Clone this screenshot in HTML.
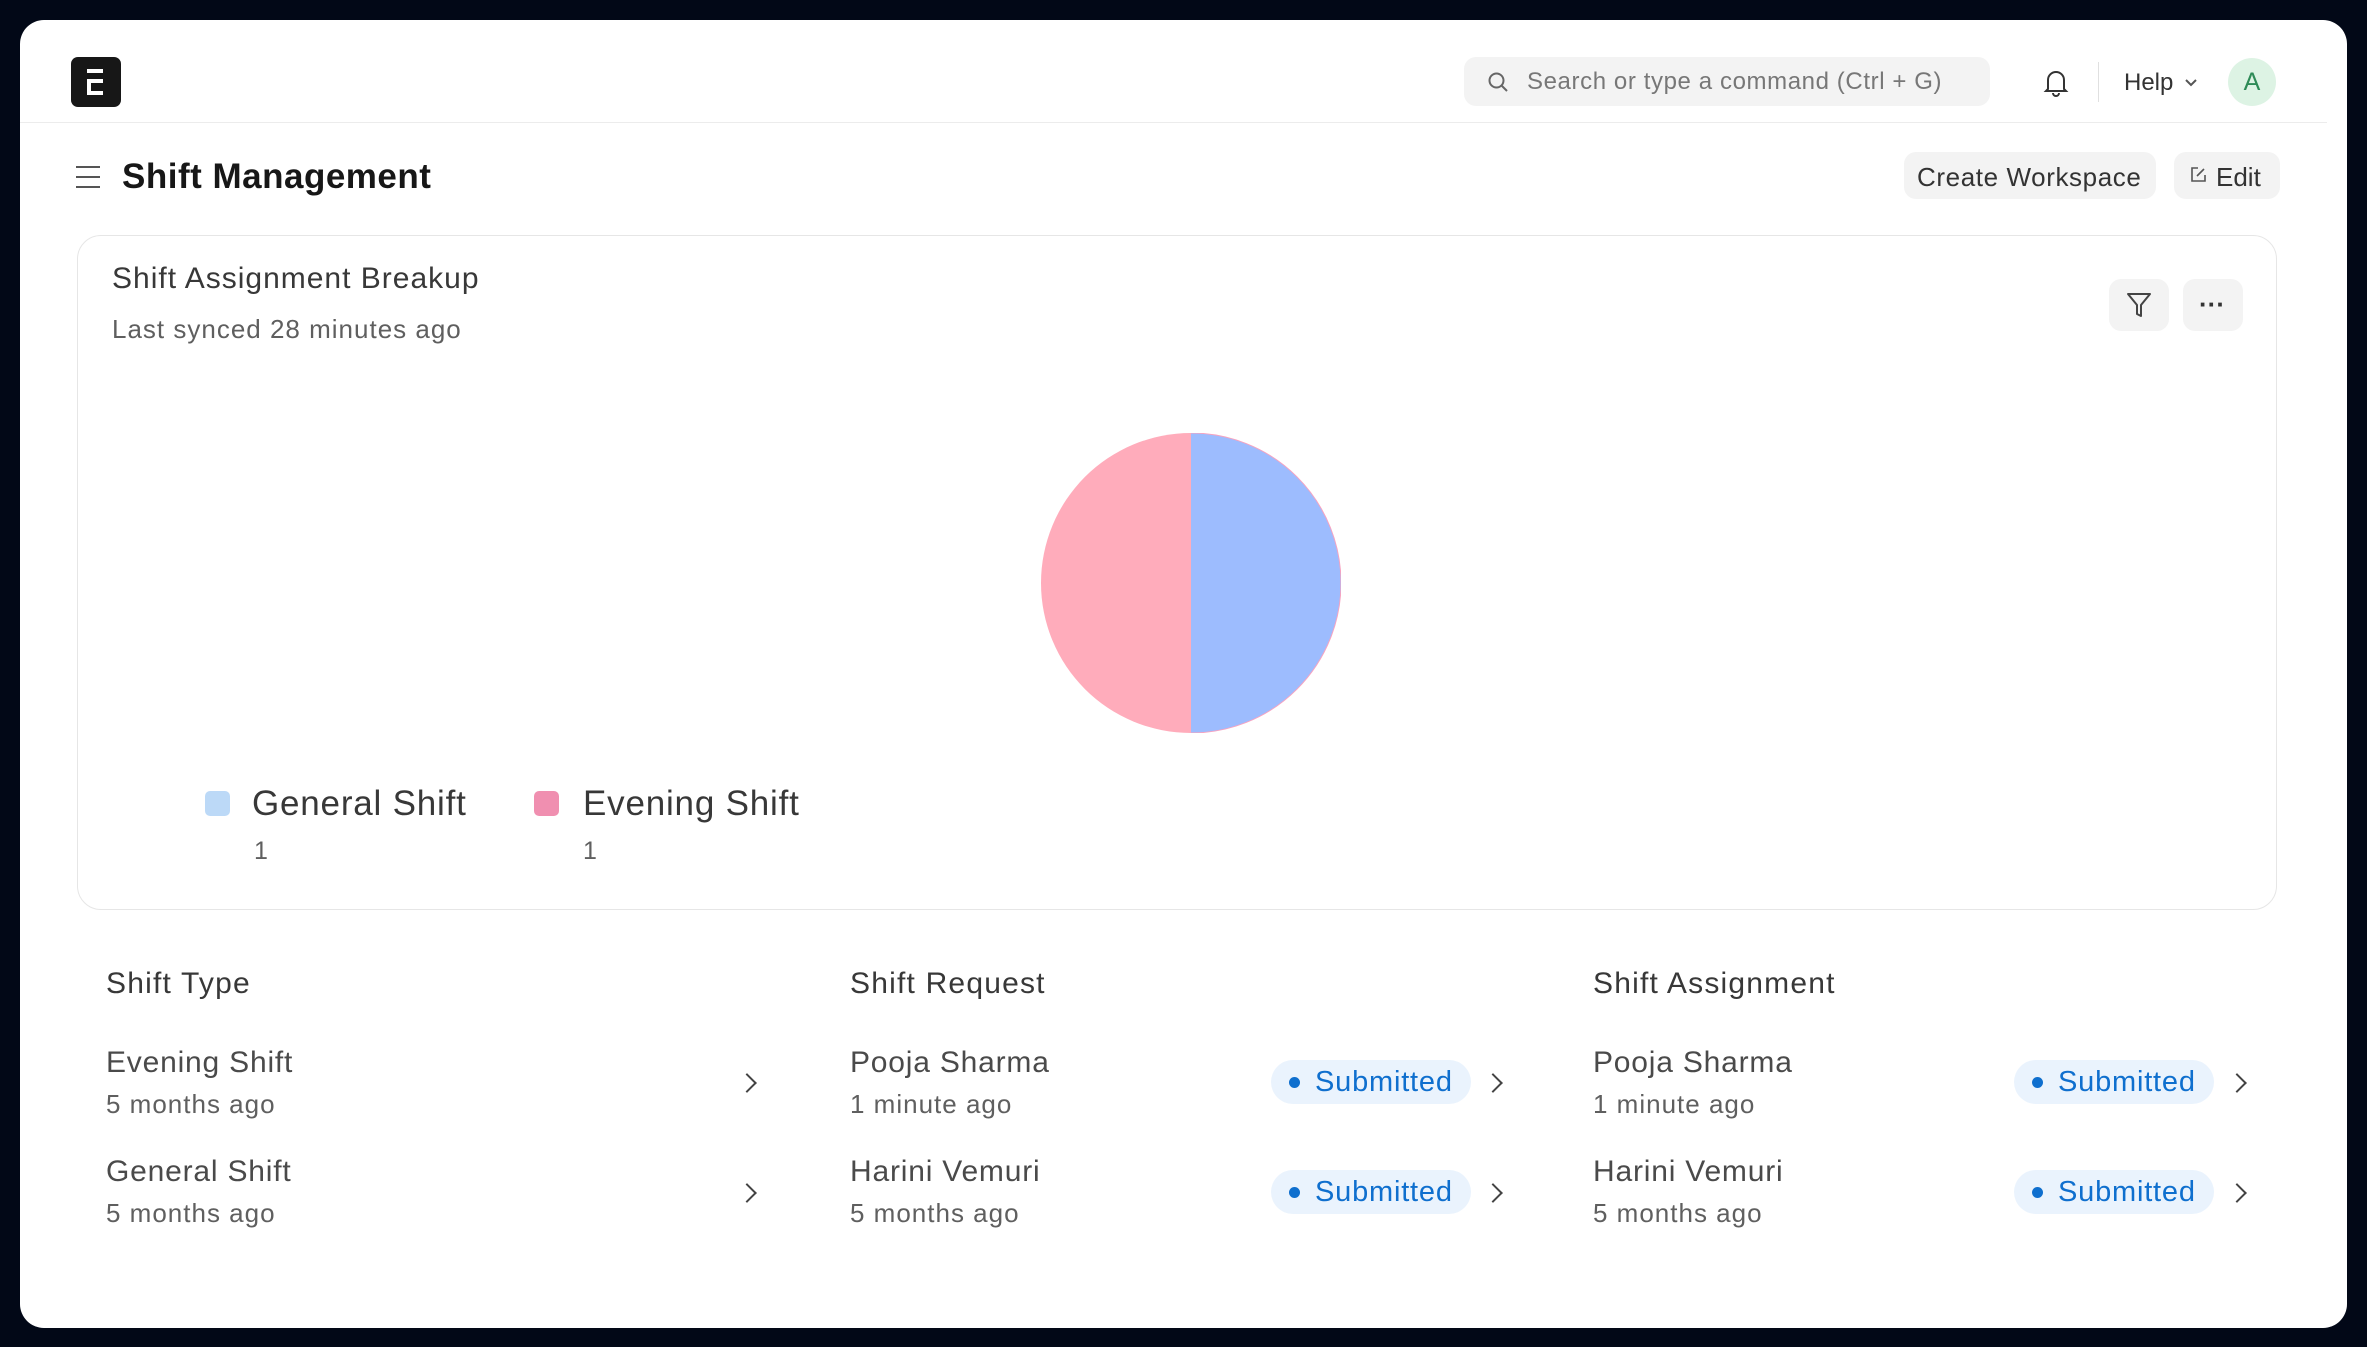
<!DOCTYPE html>
<html><head><meta charset="utf-8"><style>
*{box-sizing:border-box;margin:0;padding:0}
body{width:2367px;height:1347px;background:#020817;font-family:"Liberation Sans",sans-serif;position:relative;overflow:hidden}
.page{position:absolute;left:20px;top:20px;width:2327px;height:1308px;background:#fff;border-radius:24px}
.a{position:absolute;white-space:nowrap}
.btn{position:absolute;background:#f3f3f3;border-radius:12px}
.name{font-size:30px;letter-spacing:0.8px;color:#4a4a4a}
.sub{font-size:26px;letter-spacing:1px;color:#5f5f5f}
.head{font-size:30px;letter-spacing:1.2px;color:#383838}
.badge{position:absolute;height:44px;width:200px;background:#eaf3fd;border-radius:22px;color:#0f6fce;font-size:29px;letter-spacing:0.8px;line-height:44px;padding-left:44px}
.badge:before{content:"";position:absolute;left:18px;top:17px;width:11px;height:11px;border-radius:50%;background:#0f6fce}
.chev{position:absolute;width:14px;height:14px;border-right:2.5px solid #444;border-top:2.5px solid #444;transform:rotate(45deg)}
</style></head><body>
<div class="page"></div>
<div class="a" style="left:71px;top:57px;width:50px;height:50px;background:#171717;border-radius:7px"></div>
<div class="a" style="left:87px;top:69px;width:16px;height:4px;background:#fff"></div>
<div class="a" style="left:87px;top:79px;width:16px;height:16px;border:4px solid #fff;border-right:none"></div>
<div class="a" style="left:20px;top:122px;width:2307px;height:1px;background:#ececec"></div>
<div class="btn" style="left:1464px;top:57px;width:526px;height:49px"></div>
<svg class="a" style="left:1486px;top:70px" width="24" height="24" viewBox="0 0 24 24" fill="none" stroke="#666" stroke-width="2"><circle cx="10.5" cy="10.5" r="7"/><path d="M16 16l5 5"/></svg>
<div class="a" style="left:1527px;top:68px;font-size:24px;letter-spacing:0.6px;color:#777">Search or type a command (Ctrl + G)</div>
<svg class="a" style="left:2042px;top:67px" width="28" height="30" viewBox="0 0 28 30" fill="none" stroke="#333" stroke-width="2"><path d="M6 22V13a8 8 0 0 1 16 0v9l2 2H4z"/><path d="M11 26a3 3 0 0 0 6 0"/></svg>
<div class="a" style="left:2098px;top:62px;width:1px;height:40px;background:#e0e0e0"></div>
<div class="a" style="left:2124px;top:69px;font-size:24px;color:#333">Help</div>
<svg class="a" style="left:2184px;top:78px" width="14" height="10" viewBox="0 0 14 10" fill="none" stroke="#555" stroke-width="2"><path d="M2 2l5 5 5-5"/></svg>
<div class="a" style="left:2228px;top:58px;width:48px;height:48px;border-radius:50%;background:#ddf3e4;color:#2e8b57;font-size:25px;text-align:center;line-height:48px">A</div>
<div class="a" style="left:76px;top:166px;width:24px;height:2px;background:#555;box-shadow:0 10px 0 #555,0 20px 0 #555"></div>
<div class="a" style="left:122px;top:157px;font-size:35px;letter-spacing:0.5px;font-weight:bold;color:#171717">Shift Management</div>
<div class="btn" style="left:1904px;top:152px;width:252px;height:47px"></div>
<div class="a" style="left:1917px;top:162px;font-size:26px;letter-spacing:0.6px;color:#333">Create Workspace</div>
<div class="btn" style="left:2174px;top:152px;width:106px;height:47px"></div>
<svg class="a" style="left:2189px;top:166px" width="18" height="18" viewBox="0 0 18 18" fill="none" stroke="#555" stroke-width="1.6"><path d="M9 2H3v13h13V9"/><path d="M8 10l7-7"/></svg>
<div class="a" style="left:2216px;top:162px;font-size:26px;color:#333">Edit</div>
<div class="a" style="left:77px;top:235px;width:2200px;height:675px;border:1.5px solid #e6e6e6;border-radius:24px"></div>
<div class="a" style="left:112px;top:262px;font-size:30px;letter-spacing:1px;color:#383838">Shift Assignment Breakup</div>
<div class="a" style="left:112px;top:314px;font-size:26px;letter-spacing:1px;color:#5f5f5f">Last synced 28 minutes ago</div>
<div class="btn" style="left:2109px;top:279px;width:60px;height:52px"></div>
<svg class="a" style="left:2125px;top:290px" width="28" height="30" viewBox="0 0 28 30" fill="none" stroke="#444" stroke-width="2" stroke-linejoin="round"><path d="M3 4h22l-9 11v11l-4-2v-9z"/></svg>
<div class="btn" style="left:2183px;top:279px;width:60px;height:52px"></div>
<div class="a" style="left:2199px;top:289px;font-size:26px;color:#333;font-weight:bold">···</div>
<svg class="a" style="left:1041px;top:433px" width="300" height="300" viewBox="0 0 300 300"><path d="M150 0A150 150 0 0 1 150 300Z" fill="#9dbcfe"/><path d="M150 0A150 150 0 0 0 150 300Z" fill="#ffacbb"/><path d="M150 0A150 150 0 0 1 150 300" fill="none" stroke="#f7a3c0" stroke-width="1"/></svg>
<div class="a" style="left:205px;top:791px;width:25px;height:25px;border-radius:5px;background:#bcd9f7"></div>
<div class="a" style="left:252px;top:784px;font-size:35px;letter-spacing:0.8px;color:#383838">General Shift</div>
<div class="a" style="left:254px;top:837px;font-size:25px;color:#5f5f5f">1</div>
<div class="a" style="left:534px;top:791px;width:25px;height:25px;border-radius:5px;background:#f08fb0"></div>
<div class="a" style="left:583px;top:784px;font-size:35px;letter-spacing:0.8px;color:#383838">Evening Shift</div>
<div class="a" style="left:583px;top:837px;font-size:25px;color:#5f5f5f">1</div>
<div class="a head" style="left:106px;top:967px">Shift Type</div>
<div class="a head" style="left:850px;top:967px">Shift Request</div>
<div class="a head" style="left:1593px;top:967px">Shift Assignment</div>

<div class="a name" style="left:106px;top:1046px">Evening Shift</div>
<div class="a sub" style="left:106px;top:1089px">5 months ago</div>
<div class="a name" style="left:106px;top:1155px">General Shift</div>
<div class="a sub" style="left:106px;top:1198px">5 months ago</div>
<div class="chev" style="left:740px;top:1076px"></div>
<div class="chev" style="left:740px;top:1186px"></div>

<div class="a name" style="left:850px;top:1046px">Pooja Sharma</div>
<div class="a sub" style="left:850px;top:1089px">1 minute ago</div>
<div class="a name" style="left:850px;top:1155px">Harini Vemuri</div>
<div class="a sub" style="left:850px;top:1198px">5 months ago</div>
<div class="badge" style="left:1271px;top:1060px">Submitted</div>
<div class="badge" style="left:1271px;top:1170px">Submitted</div>
<div class="chev" style="left:1486px;top:1076px"></div>
<div class="chev" style="left:1486px;top:1186px"></div>

<div class="a name" style="left:1593px;top:1046px">Pooja Sharma</div>
<div class="a sub" style="left:1593px;top:1089px">1 minute ago</div>
<div class="a name" style="left:1593px;top:1155px">Harini Vemuri</div>
<div class="a sub" style="left:1593px;top:1198px">5 months ago</div>
<div class="badge" style="left:2014px;top:1060px">Submitted</div>
<div class="badge" style="left:2014px;top:1170px">Submitted</div>
<div class="chev" style="left:2230px;top:1076px"></div>
<div class="chev" style="left:2230px;top:1186px"></div>
</body></html>
